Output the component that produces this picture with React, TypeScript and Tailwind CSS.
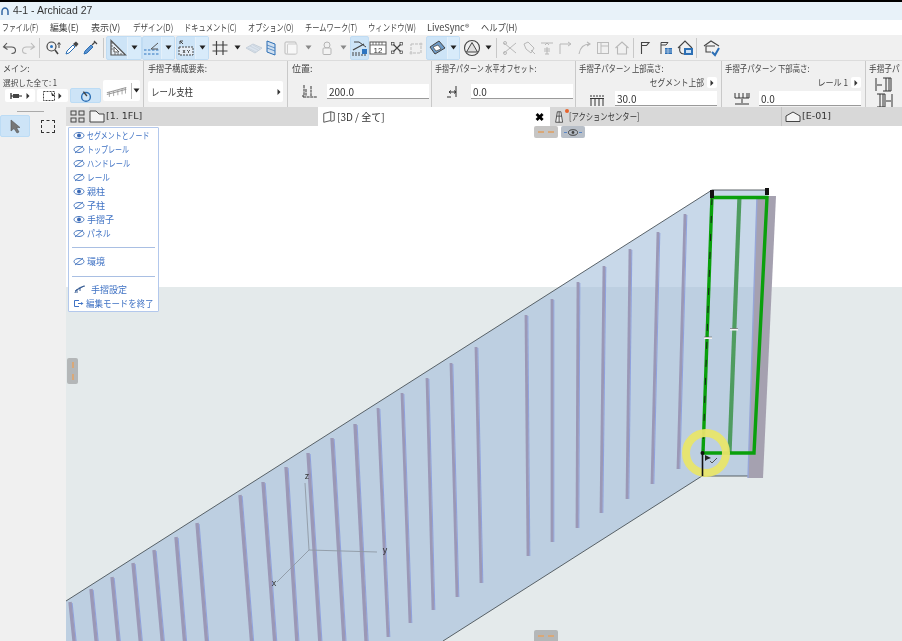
import React from "react";

type P = { className?: string };
const S = ({ children, w = 16, h = 16, vb = "0 0 16 16", className = "" }: { children: React.ReactNode; w?: number; h?: number; vb?: string; className?: string }) => (
  <svg width={w} height={h} viewBox={vb} fill="none" className={"block shrink-0 " + className}>{children}</svg>
);
const Arrow = () => <S w={7} h={5} vb="0 0 7 5"><path d="M0.5 0.5H6.5L3.5 4.5Z" fill="#222" /></S>;
const Right = ({ c = "#333" }: { c?: string }) => <S w={4} h={6} vb="0 0 4 6"><path d="M0.5 0L3.5 3L0.5 6Z" fill={c} /></S>;
const N = ({ s, o = "origin-left", children }: { s: string; o?: string; children: React.ReactNode }) => (
  <span className={"inline-block whitespace-nowrap " + o + " " + s}>{children}</span>
);

const I = {
  undo: <S><path d="M5 3L1.5 7L5.5 9.5M2 7H9.5C12 7 13.5 8.5 13.5 10.5C13.5 12.5 11.5 13.5 9.5 13.5" stroke="#555" strokeWidth="1.1" /></S>,
  redo: <S><path d="M11 3L14.5 7L10.5 9.5M14 7H6.5C4 7 2.5 8.5 2.5 10.5C2.5 12.5 4.5 13.5 6.5 13.5" stroke="#bbb" strokeWidth="1.1" /></S>,
  find: <S><circle cx="6.5" cy="6.5" r="4.5" stroke="#444" strokeWidth="1.2" /><path d="M10 10L13 14" stroke="#444" strokeWidth="1.5" /><circle cx="6.5" cy="6.5" r="1.5" fill="#2c74c0" /><path d="M14 3V8M12.5 4.5L14 2.5L15.5 4.5" stroke="#444" /></S>,
  dropper: <S><path d="M2 14L3 11L9 5L11 7L5 13Z" fill="#fff" stroke="#2c6fb5" /><path d="M9 4L12 1.5L14.5 4L12 7Z" fill="#444" /></S>,
  syringe: <S><path d="M2 14L3 11L9 5L11 7L5 13Z" fill="#5b93d0" stroke="#2c6fb5" /><path d="M10 5L13 2M12 1L15 4" stroke="#444" strokeWidth="1.2" /></S>,
  tri: <S w={20} h={20} vb="0 0 20 20"><path d="M4 2.5V17H18.5Z" stroke="#555" strokeWidth="1.2" fill="#e6eef6" /><path d="M7 9V14H12Z" stroke="#555" fill="#fff" /><path d="M4 5H6M4 8H6M4 11H6M8 17V15M11 17V15M14 17V15" stroke="#555" strokeWidth=".8" /></S>,
  guide: <S w={18} h={18} vb="0 0 18 18"><path d="M1 11H17" stroke="#2c74c0" strokeDasharray="2.5 1.5" /><path d="M1 15H17" stroke="#2c74c0" strokeDasharray="2.5 1.5" /><path d="M8 10L15 4M8 10H15" stroke="#555" /></S>,
  xy: <S w={18} h={18} vb="0 0 18 18"><path d="M3 2L6 5M3 2V5M3 2H6" stroke="#444" /><rect x="2" y="8" width="14" height="8" fill="#e6eef6" stroke="#444" strokeDasharray="2 1" /><path d="M6 11L8 14M8 11L6 14M10 11L11.5 12.5L13 11M11.5 12.5V14" stroke="#333" strokeWidth=".8" /></S>,
  grid: <S w={18} h={18} vb="0 0 18 18"><path d="M5.5 2V16M12 2V16M1.5 6H16.5M1.5 12H16.5" stroke="#444" strokeWidth="1.2" /></S>,
  plane: <S w={18} h={18} vb="0 0 18 18"><path d="M1 9L8 5L17 9L10 14Z" fill="#dbe4ee" stroke="#c6d0da" /><path d="M5 7L13 11M8 6L15 10M3 9L11 13" stroke="#c4ced8" strokeWidth=".7" /></S>,
  slab: <S w={18} h={18} vb="0 0 18 18"><path d="M5 2L13 5V16L5 13Z" fill="#cfdff0" stroke="#2c6fb5" /><path d="M5 6L13 9M5 9L13 12" stroke="#2c6fb5" strokeWidth=".7" /></S>,
  box: <S><rect x="2" y="2" width="11" height="12" rx="1" stroke="#bbb" fill="#f3f3f3" /><rect x="4.5" y="4" width="9.5" height="10" rx="1" stroke="#ccc" fill="#f7f7f7" /></S>,
  lock: <S><circle cx="8" cy="5" r="3" stroke="#b5b5b5" /><rect x="4" y="8" width="8" height="6.5" rx="1" stroke="#b5b5b5" fill="#f3f3f3" /></S>,
  stair: <S w={18} h={18} vb="0 0 18 18"><path d="M2 11L13 5" stroke="#444" strokeWidth="1.2" /><path d="M3 3H8L15 8" stroke="#444" /><rect x="11" y="10" width="5" height="5" fill="#2c74c0" /><path d="M1 14H10M1 16H15" stroke="#444" strokeDasharray="2 1" /></S>,
  ruler: <S w={18} h={18} vb="0 0 18 18"><rect x="1" y="3" width="16" height="12" fill="#fff" stroke="#555" /><path d="M1 6H17M4 3V6M7 3V6M10 3V6M13 3V6" stroke="#555" strokeWidth=".8" /><text x="9" y="14" textAnchor="middle" fontSize="8" fontFamily="Liberation Sans" fill="#333">12</text></S>,
  cross: <S><path d="M4.5 4.5L11.5 11.5M11.5 4.5L4.5 11.5" stroke="#444" strokeWidth="1.1" /><rect x="2.5" y="2.5" width="2.5" height="2.5" stroke="#444" strokeWidth=".7" /><rect x="11" y="2.5" width="2.5" height="2.5" stroke="#444" strokeWidth=".7" /><rect x="2.5" y="11" width="2.5" height="2.5" stroke="#444" strokeWidth=".7" /><rect x="11" y="11" width="2.5" height="2.5" stroke="#444" strokeWidth=".7" /></S>,
  greyBox: <S><rect x="3" y="4" width="10" height="9" stroke="#bbb" strokeDasharray="3 1" /><circle cx="3" cy="13" r="1.5" fill="#ccc" /><circle cx="13" cy="4" r="1.5" fill="#ccc" /></S>,
  cubeView: <S w={20} h={20} vb="0 0 20 20"><path d="M3 9L12 3L18 10L8 16Z" fill="#6f9cc8" stroke="#444" /><path d="M6 9L11 7L14 11L9 13Z" fill="#fff" stroke="#444" strokeWidth=".7" /></S>,
  triCircle: <S w={18} h={18} vb="0 0 18 18"><circle cx="9" cy="9" r="7.5" stroke="#444" strokeWidth="1.1" /><path d="M9 3.5L14.5 13H3.5Z" stroke="#444" fill="#dedede" /></S>,
  g1: <S><path d="M2 3L14 13M2 13L14 3" stroke="#b8b8b8" /><circle cx="3" cy="3" r="1.5" stroke="#b8b8b8" /><circle cx="3" cy="13" r="1.5" stroke="#b8b8b8" /></S>,
  g2: <S><path d="M3 4L7 2L13 8L10 13L5 9Z" stroke="#b8b8b8" /><path d="M10 10L14 14" stroke="#b8b8b8" /></S>,
  g3: <S><path d="M8 7V14M6 14H10M2 3H14M5 9H11M5 11H11" stroke="#b8b8b8" /><path d="M6 5L8 3L10 5" stroke="#b8b8b8" /></S>,
  g4: <S><path d="M3 14V4H13M11 2L14 4L11 6" stroke="#b8b8b8" /></S>,
  g5: <S><path d="M3 14C4 8 8 4 14 4M11 2L14 4L11 6" stroke="#b8b8b8" strokeWidth="1.1" /></S>,
  g6: <S><rect x="2.5" y="2.5" width="11" height="11" stroke="#bbb" /><path d="M6 6H13M6 2V13" stroke="#bbb" /></S>,
  home: <S><path d="M1.5 8L8 2L14.5 8M3.5 7V14H12.5V7" stroke="#b8b8b8" strokeWidth="1.1" /></S>,
  flag: <S><path d="M3.5 14V2.5H11L8.5 5.5H3.5" stroke="#444" strokeWidth="1.1" /></S>,
  flag2: <S><path d="M3 14V2.5H10L8 5H3" stroke="#444" /><rect x="7" y="8" width="7" height="6" fill="#2c6fb5" /><path d="M7 10H14M7 12H14M10 8V14" stroke="#fff" strokeWidth=".5" /></S>,
  home2: <S w={18} h={18} vb="0 0 18 18"><path d="M2 9L9 2L16 9M4 8C3 12 4 15 8 15" stroke="#444" strokeWidth="1.1" /><rect x="8" y="9" width="9" height="7" fill="#2c6fb5" /><rect x="10" y="11" width="5" height="3" fill="#cfe3f7" /></S>,
  homeCheck: <S w={18} h={18} vb="0 0 18 18"><path d="M1 7L8 2L16 7M3 7V13H8" stroke="#444" strokeWidth="1.1" /><path d="M3 7H12" stroke="#444" /><path d="M9 13L12 16L16 9" stroke="#2c6fb5" strokeWidth="2" /></S>,
};

const Tool = ({ className = "", children }: P & { children?: React.ReactNode }) => (
  <div className={"flex h-[24px] shrink-0 items-center justify-center " + className}>{children}</div>
);
const Sep = ({ className = "" }: P) => <div className={"h-[20px] w-px shrink-0 bg-[#c8c8c8] " + className} />;
const Group = ({ className = "", icon }: P & { icon: React.ReactNode }) => (
  <div className={"flex h-[24px] shrink-0 rounded-[2px] border border-[#c0dcf3] bg-[#cde4f7] " + className}>
    <div className="flex flex-1 items-center justify-center">{icon}</div>
    <div className="flex w-[15px] items-center justify-center border-l border-[#e4f0fa] bg-[#d8ebfa]"><Arrow /></div>
  </div>
);

const Toolbar = () => (
  <div className="flex h-[25px] shrink-0 items-center bg-[#f0f0f0] pl-[1px]">
    <Tool className="w-[18px]">{I.undo}</Tool>
    <Tool className="w-[18px]">{I.redo}</Tool>
    <Sep className="mx-[2px]" />
    <Tool className="w-[21px]">{I.find}</Tool>
    <Tool className="w-[18px]">{I.dropper}</Tool>
    <Tool className="w-[18px]">{I.syringe}</Tool>
    <Sep className="ml-[4px] mr-[2px]" />
    <Group className="w-[36px]" icon={I.tri} />
    <Group className="w-[33px]" icon={I.guide} />
    <Group className="ml-[1px] w-[33px]" icon={I.xy} />
    <Tool className="ml-[2px] w-[18px]">{I.grid}</Tool>
    <Tool className="w-[16px]"><Arrow /></Tool>
    <Tool className="w-[17px]">{I.plane}</Tool>
    <Tool className="w-[18px]">{I.slab}</Tool>
    <Tool className="ml-[1px] w-[19px]">{I.box}</Tool>
    <Tool className="w-[16px]"><S w={7} h={5} vb="0 0 7 5"><path d="M0.5 0.5H6.5L3.5 4.5Z" fill="#888" /></S></Tool>
    <Tool className="ml-[2px] w-[18px]">{I.lock}</Tool>
    <Tool className="w-[14px]"><S w={7} h={5} vb="0 0 7 5"><path d="M0.5 0.5H6.5L3.5 4.5Z" fill="#888" /></S></Tool>
    <Tool className="w-[19px] rounded-[2px] border border-[#c0dcf3] bg-[#cde4f7]">{I.stair}</Tool>
    <Tool className="w-[18px]">{I.ruler}</Tool>
    <Tool className="ml-[1px] w-[18px]">{I.cross}</Tool>
    <Tool className="ml-[1px] w-[18px]">{I.greyBox}</Tool>
    <Group className="ml-[1px] w-[34px]" icon={I.cubeView} />
    <Tool className="ml-[3px] w-[18px]">{I.triCircle}</Tool>
    <Tool className="w-[14px]"><Arrow /></Tool>
    <Sep className="ml-[1px] mr-[4px]" />
    <Tool className="w-[18px]">{I.g1}</Tool>
    <Tool className="w-[19px]">{I.g2}</Tool>
    <Tool className="w-[18px]">{I.g3}</Tool>
    <Tool className="w-[18px]">{I.g4}</Tool>
    <Tool className="w-[19px]">{I.g5}</Tool>
    <Tool className="w-[19px]">{I.g6}</Tool>
    <Tool className="w-[19px]">{I.home}</Tool>
    <Sep className="mx-[2px]" />
    <Tool className="w-[20px]">{I.flag}</Tool>
    <Tool className="w-[19px]">{I.flag2}</Tool>
    <Tool className="w-[19px]">{I.home2}</Tool>
    <Sep className="ml-[2px] mr-[5px]" />
    <Tool className="w-[20px]">{I.homeCheck}</Tool>
  </div>
);

const Label = ({ children }: { children: React.ReactNode }) => (
  <div className="h-[14px] whitespace-nowrap text-[9px] leading-[14px] text-[#444]">{children}</div>
);
const Field = ({ value, className = "" }: P & { value: string }) => (
  <div className={"flex h-[15px] items-center border-b border-[#9a9a9a] bg-white pl-[2px] text-[10px] text-[#333] " + className}>{value}</div>
);
const Section = ({ className = "", children }: P & { children: React.ReactNode }) => (
  <div className={"shrink-0 border-r border-[#c9c9c9] pt-[1px] " + className}>{children}</div>
);
const RailGlyph = ({ w = 26 }: { w?: number }) => (
  <S w={w} h={14} vb="0 0 26 14"><path d="M1 9L24 3M1 11L24 5" stroke="#999" strokeWidth="1.2" /><path d="M4 8V14M9 7V13M14 6V12M19 4V11M23 3V10" stroke="#999" /></S>
);
const Drop = ({ children }: { children: React.ReactNode }) => (
  <div className="flex h-[13px] items-center justify-end gap-[3px] pr-[4px] text-[9px] text-[#444]">
    {children}
    <span className="flex h-[11px] w-[10px] items-center justify-center rounded-[2px] bg-white"><Right /></span>
  </div>
);

const InfoBox = () => (
  <div className="flex h-[47px] shrink-0 overflow-hidden border-t border-[#dcdcdc] bg-[#f0f0f0]">
    <Section className="w-[144px] pl-[3px]">
      <Label><N s="scale-x-[.9]">メイン:</N></Label>
      <div className="mt-[1px] h-[10px] text-[8.5px] leading-[10px] text-[#444]"><N s="scale-x-[.9]">選択した全て: 1</N></div>
      <div className="relative ml-[2px] mt-[1px] flex items-center">
        <div className="flex h-[13px] w-[30px] items-center justify-center gap-[3px] rounded-[2px] bg-white">
          <S w={13} h={8} vb="0 0 13 8"><path d="M1 1V7M1 4H12" stroke="#222" strokeWidth="1.2" /><rect x="3" y="2" width="6" height="4" fill="#444" /></S>
          <Right />
        </div>
        <div className="ml-[2px] flex h-[13px] w-[31px] items-center justify-center gap-[2px] rounded-[2px] bg-white">
          <S w={13} h={10} vb="0 0 13 10"><rect x=".5" y=".5" width="11" height="9" stroke="#444" strokeDasharray="2 1" /><path d="M8 1L12 5L9 5Z" fill="#333" /></S>
          <Right />
        </div>
        <div className="ml-[2px] flex h-[15px] w-[31px] items-center justify-center rounded-[2px] border border-[#bcdcf5] bg-[#cde4f7]">
          <S w={14} h={14}><circle cx="8" cy="9" r="5" stroke="#2c6fb5" strokeWidth="1.6" /><path d="M5 3L9 8" stroke="#444" strokeWidth="1.6" /></S>
        </div>
        <div className="absolute left-[98px] top-[-8px] flex h-[21px] w-[37px] items-center rounded-[2px] bg-white">
          <div className="flex w-[28px] justify-center"><RailGlyph w={22} /></div>
          <div className="h-[16px] w-px bg-[#bbb]" />
          <div className="flex flex-1 justify-center"><Arrow /></div>
        </div>
      </div>
    </Section>
    <Section className="w-[144px] pl-[4px]">
      <Label><N s="scale-x-[.9]">手摺子構成要素:</N></Label>
      <div className="mt-[5px] flex h-[21px] w-[135px] items-center justify-between rounded-[2px] bg-white pl-[3px] pr-[2px] text-[10px] text-[#333]">
        <N s="scale-x-[.84]">レール支柱</N><Right />
      </div>
    </Section>
    <Section className="w-[144px] pl-[4px]">
      <Label>位置:</Label>
      <div className="mt-[8px] flex items-center">
        <div className="flex w-[35px] justify-center">
          <S w={17} h={15} vb="0 0 17 15"><path d="M3 1V12M1 12H3M5 5V12M10 2V12M2 13H16" stroke="#333" strokeWidth="1" strokeDasharray="3 .6" /></S>
        </div>
        <Field value="200.0" className="w-[102px]" />
      </div>
    </Section>
    <Section className="w-[144px] pl-[3px]">
      <Label><N s="scale-x-[.78]">手摺子パターン 水平オフセット:</N></Label>
      <div className="mt-[8px] flex items-center">
        <div className="flex w-[36px] justify-center">
          <S w={15} h={15} vb="0 0 15 15"><path d="M10 2V13M3 8H10M3 8L5 6.5M3 8L5 9.5M8 6.5L10 8L8 9.5M1 13H5" stroke="#333" /></S>
        </div>
        <Field value="0.0" className="w-[102px]" />
      </div>
    </Section>
    <Section className="w-[146px] pl-[3px]">
      <Label><N s="scale-x-[.82]">手摺子パターン 上部高さ:</N></Label>
      <Drop><N s="scale-x-[.86]" o="origin-right">セグメント上部</N></Drop>
      <div className="mt-[2px] flex items-center">
        <div className="flex w-[36px] justify-center">
          <S w={18} h={14} vb="0 0 18 14"><path d="M2 4H16" stroke="#333" strokeDasharray="2 1" /><path d="M2 6.5H16M3 6.5V14M7 6.5V14M11 6.5V14M15 6.5V14" stroke="#333" /></S>
        </div>
        <Field value="30.0" className="w-[102px]" />
      </div>
    </Section>
    <Section className="w-[144px] pl-[3px]">
      <Label><N s="scale-x-[.82]">手摺子パターン 下部高さ:</N></Label>
      <Drop><N s="scale-x-[.9]" o="origin-right">レール 1</N></Drop>
      <div className="mt-[2px] flex items-center">
        <div className="flex w-[34px] justify-center">
          <S w={18} h={14} vb="0 0 18 14"><path d="M2 1V6H16V1M6 1V6M10 1V6M14 1V6M9 7V11M2 12H16" stroke="#333" /></S>
        </div>
        <Field value="0.0" className="w-[102px]" />
      </div>
    </Section>
    <div className="min-w-0 flex-1 pl-[3px] pt-[1px]">
      <Label><N s="scale-x-[.85]">手摺子パ</N></Label>
      <div className="mt-[1px] flex flex-col items-center gap-[1px] pr-[4px]">
        <S w={18} h={15} vb="0 0 18 15"><path d="M8 1H16V14H8M11 1V14M14 1V14M2 8H7M1 1V14" stroke="#333" /></S>
        <S w={18} h={15} vb="0 0 18 15"><path d="M2 1H10V14H2M5 1V14M8 1V14M11 8H16M17 1V14" stroke="#333" /></S>
      </div>
    </div>
  </div>
);

const Tabs = () => (
  <div className="flex h-[19px] shrink-0 bg-[#f0f0f0] text-[10px] text-[#333]">
    <div className="w-[66px] shrink-0" />
    <div className="flex flex-1 items-stretch bg-[#d8d8d8]">
      <div className="flex w-[23px] items-center justify-center bg-[#dedede]">
        <S w={15} h={13} vb="0 0 15 13"><rect x="1" y="1" width="5" height="4" stroke="#444" /><rect x="9" y="1" width="5" height="4" stroke="#444" /><rect x="1" y="8" width="5" height="4" stroke="#444" /><rect x="9" y="8" width="5" height="4" stroke="#444" /></S>
      </div>
      <div className="flex w-[229px] items-center gap-[1px]">
        <S w={16} h={13} vb="0 0 16 13"><path d="M1 12V1H7L10 4H15V12Z" stroke="#444" fill="#f4f4f4" /></S>
        <span className="[font-family:'DejaVu_Sans','Noto_Sans_CJK_JP',sans-serif] text-[9.5px]">[1. 1FL]</span>
      </div>
      <div className="flex w-[232px] items-center bg-white pl-[4px] pr-[6px]">
        <S w={14} h={14}><path d="M2 4L10 2V12L2 14ZM10 2L14 3V12L10 13" stroke="#444" fill="#fff" /></S>
        <span className="ml-[1px] flex-1 text-[10px]">[3D / 全て]</span>
        <span className="text-[11px] font-bold leading-none text-black">✖</span>
      </div>
      <div className="flex w-[232px] items-center gap-[2px] border-r border-[#c4c4c4] pl-[3px]">
        <span className="relative">
          <S w={14} h={16}><path d="M5 2H9L11 14H3Z" stroke="#444" fill="#eee" /><path d="M4 7H10M7 2V14" stroke="#444" /></S>
          <span className="absolute right-[-2px] top-[0px] h-[4px] w-[4px] rounded-full bg-[#e8632b]" />
        </span>
        <span className="text-[9.5px]"><N s="scale-x-[.77]">[アクションセンター]</N></span>
      </div>
      <div className="flex flex-1 items-center gap-[1px] pl-[3px]">
        <S w={16} h={13} vb="0 0 16 13"><path d="M1 11.5V6L8 2L15 6V11.5Z" stroke="#444" fill="#f4f4f4" /></S>
        <span className="[font-family:'DejaVu_Sans',sans-serif] text-[9.5px]">[E-01]</span>
      </div>
    </div>
  </div>
);

const Eye = ({ on }: { on: boolean }) => (
  <S w={12} h={9} vb="0 0 12 9">
    <ellipse cx="6" cy="4.5" rx="5" ry="3" stroke="#4a79c0" strokeWidth="1" />
    {on ? <circle cx="6" cy="4.5" r="2" fill="#3a68b5" /> : <path d="M2 8L10 1" stroke="#4a79c0" strokeWidth="1" />}
  </S>
);
const Row = ({ on, children }: { on: boolean; children: React.ReactNode }) => (
  <div className="flex h-[14px] items-center gap-[2px] pl-[4px]">
    <Eye on={on} /><span className="whitespace-nowrap">{children}</span>
  </div>
);
const Divider = ({ className = "" }: P) => <div className={"mx-[3px] h-px bg-[#a9bfe3] " + className} />;

const Panel = () => (
  <div className="absolute left-[2px] top-[1px] h-[185px] w-[91px] rounded-[1px] border border-[#b3c8ec] bg-white pt-[0.5px] text-[9px] leading-[14px] text-[#3f72c4]">
    <Row on><N s="scale-x-[.77]">セグメントとノード</N></Row>
    <Row on={false}><N s="scale-x-[.78]">トップレール</N></Row>
    <Row on={false}><N s="scale-x-[.8]">ハンドレール</N></Row>
    <Row on={false}><N s="scale-x-[.85]">レール</N></Row>
    <Row on>親柱</Row>
    <Row on={false}>子柱</Row>
    <Row on>手摺子</Row>
    <Row on={false}><N s="scale-x-[.88]">パネル</N></Row>
    <Divider className="mb-[7px] mt-[6px]" />
    <Row on={false}>環境</Row>
    <Divider className="mb-[6px] mt-[7px]" />
    <div className="flex h-[14px] items-center gap-[5px] pl-[5px]">
      <S w={12} h={9} vb="0 0 12 9"><path d="M1 8C2 4 6 2 11 1M1 6L10 1M3 8V4M6 6V3" stroke="#3a5f95" /></S>
      <span className="whitespace-nowrap">手摺設定</span>
    </div>
    <div className="flex h-[14px] items-center gap-[2px] pl-[4px]">
      <S w={11} h={9} vb="0 0 11 9"><path d="M6 1.5H1.5V7.5H6M5 4.5H9" stroke="#3f72c4" /><path d="M8 3L10.5 4.5L8 6Z" fill="#3f72c4" /></S>
      <N s="scale-x-[.94]">編集モードを終了</N>
    </div>
  </div>
);

const tops: [number, number, number, number][] = [
  [70, 602, 76, 660], [91, 589, 98, 660], [112, 577, 120, 660], [133, 563, 142, 660], [154, 550, 164, 660], [176, 537, 186, 660], [197, 523, 208, 660],
  [240, 495, 253, 660], [263, 482, 276, 660], [286, 467, 298, 660], [308, 453, 321, 660], [332, 438, 345, 660], [355, 424, 367, 660],
  [378, 408, 388, 637], [402, 393, 410, 623], [427, 378, 433, 610], [451, 363, 457, 597], [476, 347, 481, 583],
  [526, 315, 528, 556], [552, 299, 552, 542], [578, 282, 577, 528], [604, 266, 601, 513], [630, 249, 627, 499], [658, 232, 652, 484], [685, 214, 678, 469],
];

const Scene = () => (
  <svg viewBox="66 126 836 515" className="block h-full w-full">
    <rect x="66" y="287" width="836" height="354" fill="#e4eaeb" />
    <polygon points="66,601 712,190 768,190 750,476 702,476 443,641 66,641" fill="#a2bdda" fillOpacity=".59" />
    <path d="M66 601L712 190H768M702 476L443 641M702 476H750" stroke="#4a5258" strokeWidth=".9" fill="none" />
    {tops.map(([a, b, c, d], i) => {
      const sw = i < 13 ? 3.4 : 2.8;
      return (
        <g key={i}>
          <path d={`M${a + sw / 2 + 0.4} ${b + 1}L${c + sw / 2 + 0.4} ${d}`} stroke="#8fa3e0" strokeWidth="1.1" />
          <path d={`M${a} ${b}L${c} ${d}`} stroke="#9b98b6" strokeWidth={sw} />
        </g>
      );
    })}
    <polygon points="757,196 776,196 763,478 748,478" fill="#a5a1b0" />
    <path d="M757 196L748 478" stroke="#97a6d8" strokeWidth="1.4" />
    <path d="M712 196L703 453" stroke="#0aa00c" strokeWidth="3.4" fill="none" />
    <path d="M712 198L703 450" stroke="#152515" strokeWidth="1" strokeDasharray="7 11" />
    <path d="M739.500 196L729.500 453" stroke="#4f9c60" strokeWidth="4.2" fill="none" />
    <path d="M712 197.500H767L754 453H703" stroke="#0aa00c" strokeWidth="3.4" fill="none" />
    <circle cx="706" cy="453" r="20" stroke="#e8e56a" strokeWidth="8" fill="none" strokeOpacity=".95" />
    <path d="M702.500 453V476" stroke="#111" strokeWidth="1.6" />
    <rect x="710" y="190" width="4" height="8" fill="#111" />
    <rect x="765" y="188" width="4" height="7" fill="#111" />
    <circle cx="702.500" cy="453" r="2" fill="#111" />
    <path d="M705 455L705 461L707 459.500L711 458Z" fill="#222" />
    <path d="M710 461L712 463L717 458" stroke="#444" fill="none" strokeWidth=".9" />
    <path d="M704 338H712M730 329.500H738" stroke="#f3f3f3" strokeWidth="2" />
    <path d="M704 337H712M730 328.500H738" stroke="#444" strokeWidth=".5" />
    <path d="M305 483L309 550L377 552M309 550L277 582" stroke="#8f99a4" strokeWidth=".9" fill="none" />
    <text x="307" y="479" textAnchor="middle" fontSize="9" fontFamily="Liberation Sans" fill="#333">z</text>
    <text x="385" y="553" textAnchor="middle" fontSize="9" fontFamily="Liberation Sans" fill="#333">y</text>
    <text x="274" y="586" textAnchor="middle" fontSize="9" fontFamily="Liberation Sans" fill="#333">x</text>
  </svg>
);

const Dashes = () => <div className="h-0 w-[16px] border-t-2 border-dashed border-[#d9a878]" />;

const Menu = () => (
  <div className="flex h-[15px] shrink-0 items-center bg-white pl-[2px] text-[9.5px] text-[#444]">
    <span className="w-[48px] shrink-0"><N s="scale-x-[.73]">ファイル(F)</N></span>
    <span className="w-[41px] shrink-0"><N s="scale-x-[.93]">編集(E)</N></span>
    <span className="w-[42px] shrink-0"><N s="scale-x-[.95]">表示(V)</N></span>
    <span className="w-[51px] shrink-0"><N s="scale-x-[.79]">デザイン(D)</N></span>
    <span className="w-[64px] shrink-0"><N s="scale-x-[.76]">ドキュメント(C)</N></span>
    <span className="w-[57px] shrink-0"><N s="scale-x-[.75]">オプション(O)</N></span>
    <span className="w-[63px] shrink-0"><N s="scale-x-[.76]">チームワーク(T)</N></span>
    <span className="w-[59px] shrink-0"><N s="scale-x-[.77]">ウィンドウ(W)</N></span>
    <span className="w-[54px] shrink-0"><N s="scale-x-[.97]">LiveSync®</N></span>
    <span className="w-[40px] shrink-0"><N s="scale-x-[.87]">ヘルプ(H)</N></span>
  </div>
);

export default function App() {
  return (
    <div className="flex h-[641px] w-[902px] flex-col overflow-hidden bg-white [font-family:'Noto_Sans_CJK_JP','Noto_Sans',sans-serif] [filter:blur(0.35px)]">
      <div className="h-[2px] shrink-0 bg-black" />
      <div className="flex h-[18px] shrink-0 items-center gap-[4px] bg-[#e8f2f9] pl-[1px] text-[10.5px] text-[#333] [font-family:'Liberation_Sans',sans-serif]">
        <S w={8} h={9} vb="0 0 8 9"><path d="M1 8V4.500C1 2.500 2.500 1 4 1C5.500 1 7 2.500 7 4.500V8" stroke="#2a5f9e" strokeWidth="1.4" /></S>
        <span>4-1 - Archicad 27</span>
      </div>
      <Menu />
      <Toolbar />
      <InfoBox />
      <Tabs />
      <div className="flex min-h-0 flex-1">
        <div className="relative w-[66px] shrink-0 bg-[#f0f0f0]">
          <div className="absolute left-[17px] top-[-15px] h-px w-[27px] bg-[#aaa]" />
          <div className="absolute left-0 top-[-11px] flex h-[22px] w-[30px] items-center justify-center rounded-[2px] border border-[#bcdcf5] bg-[#cde4f7]">
            <S w={12} h={15} vb="0 0 12 15"><path d="M2 1V12L5 9.500L8 14L10 13L7.500 8.500H11Z" fill="#777" stroke="#555" strokeWidth=".6" /></S>
          </div>
          <div className="absolute left-[41px] top-[-6px] h-[13px] w-[14px] border border-dashed border-[#333]" />
        </div>
        <div className="relative min-w-0 flex-1">
          <Scene />
          <Panel />
          <div className="absolute left-[468px] top-0 flex h-[12px] w-[24px] items-center justify-center rounded-[2px] bg-[#c6c5c4]"><Dashes /></div>
          <div className="absolute left-[495px] top-0 flex h-[12px] w-[24px] items-center justify-center rounded-[2px] bg-[#b8bfc8]">
            <S w={18} h={7} vb="0 0 18 7"><path d="M0 3.500H3M15 3.500H18" stroke="#5b86c4" /><ellipse cx="9" cy="3.500" rx="4.500" ry="2.800" stroke="#444" /><circle cx="9" cy="3.500" r="1.400" fill="#444" /></S>
          </div>
          <div className="absolute left-[1px] top-[232px] flex h-[26px] w-[11px] items-center justify-center rounded-[2px] bg-[#b4b7b8]">
            <div className="h-[18px] w-0 border-l-2 border-dashed border-[#d9a878]" />
          </div>
          <div className="absolute bottom-0 left-[468px] flex h-[11px] w-[24px] items-center justify-center rounded-t-[2px] bg-[#b4b7b8]"><Dashes /></div>
        </div>
      </div>
    </div>
  );
}
